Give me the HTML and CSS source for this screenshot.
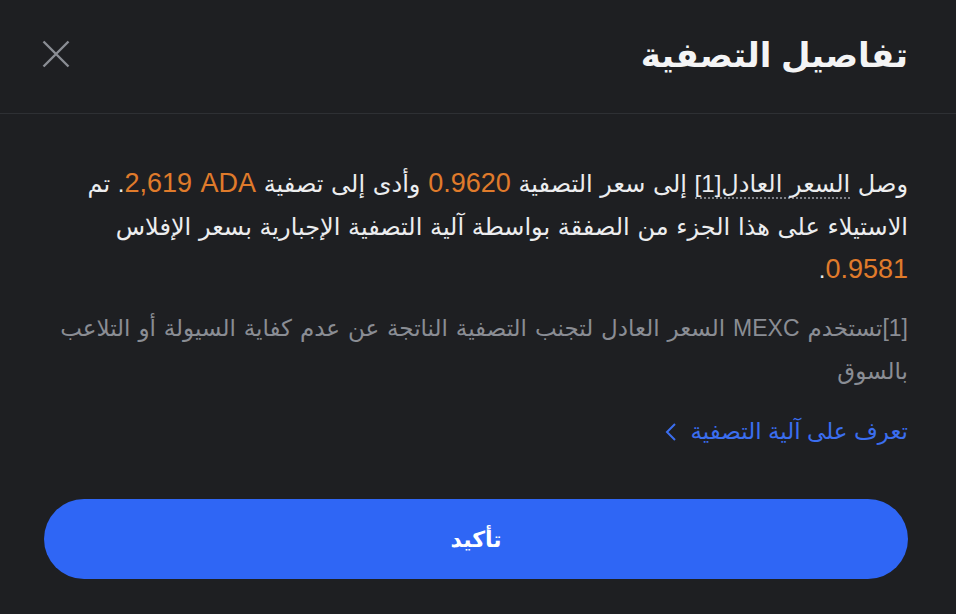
FILE: index.html
```html
<!DOCTYPE html>
<html lang="ar" dir="rtl">
<head>
    <meta charset="UTF-8">
    <meta name="viewport" content="width=device-width, initial-scale=1.0">
    <title>تفاصيل التصفية</title>
    <link rel="stylesheet" href="styles.css">
</head>
<body>
    <div class="dialog">
        <header class="dialog_head">
            <h1>تفاصيل التصفية</h1>
            <button class="close" aria-label="close">
                <svg width="28" height="28" viewBox="0 0 28 28"><path d="M1.5 1.5L26.5 26.5M26.5 1.5L1.5 26.5" stroke="#8a8d94" stroke-width="2.4" fill="none"/></svg>
            </button>
        </header>
        <section class="dialog_body">
            <p class="main_text">وصل <span class="dotted">السعر العادل[1]</span> إلى سعر التصفية <span class="num">0.9620</span> وأدى إلى تصفية <span class="num" dir="ltr">2,619 ADA</span>. تم<br>الاستيلاء على هذا الجزء من الصفقة بواسطة آلية التصفية الإجبارية بسعر الإفلاس<br><span class="num">0.9581</span>.</p>
            <p class="note">[1]تستخدم MEXC السعر العادل لتجنب التصفية الناتجة عن عدم كفاية السيولة أو التلاعب<br>بالسوق</p>
            <a class="more" href="#">تعرف على آلية التصفية <svg width="14" height="22" viewBox="0 0 14 22"><path d="M11 3L3 11L11 19" stroke="#3b6ef0" stroke-width="2" fill="none"/></svg></a>
            <button class="confirm">تأكيد</button>
        </section>
    </div>
</body>
</html>
```

FILE: styles.css
```css
* { margin: 0; padding: 0; box-sizing: border-box;}
html, body { background: #1e1f22; }
body { font-family: "Liberation Sans", "DejaVu Sans", sans-serif; color: #ecedef; }
.dialog { width: 956px; height: 614px; background: #1e1f22; }
.dialog_head { height: 114px; display: flex; align-items: center; justify-content: space-between; padding: 0 48px 0 42px; border-bottom: 1px solid #2e3034; }
.dialog_head h1 { font-size: 34px; font-weight: bold; color: #f4f4f5; padding-bottom: 4px; }
.close { background: none; border: 0; width: 28px; height: 28px; display: flex; margin-bottom: 6px; }
.dialog_body { padding: 48px 48px 0 44px; display: flex; flex-direction: column; }
.main_text { font-size: 24px; line-height: 43px; word-spacing: 1px; }
.num { color: #e07b2b; font-size: 27px; line-height: 1; }
.dotted { border-bottom: 2px dotted #7d8087; }
.note { font-size: 23px; line-height: 43px; color: #8a8d94; margin-top: 16px; word-spacing: 1.5px; white-space: nowrap; }
.more { color: #3b6ef0; font-size: 23px; text-decoration: none; margin-top: 25px; display: flex; align-items: center; gap: 12px; }
.confirm { margin-top: 54px; width: 864px; height: 80px; border-radius: 40px; border: 0; background: #2f66f5; color: #fff; font-family: "DejaVu Sans", sans-serif; font-size: 22px; font-weight: bold; }
```
